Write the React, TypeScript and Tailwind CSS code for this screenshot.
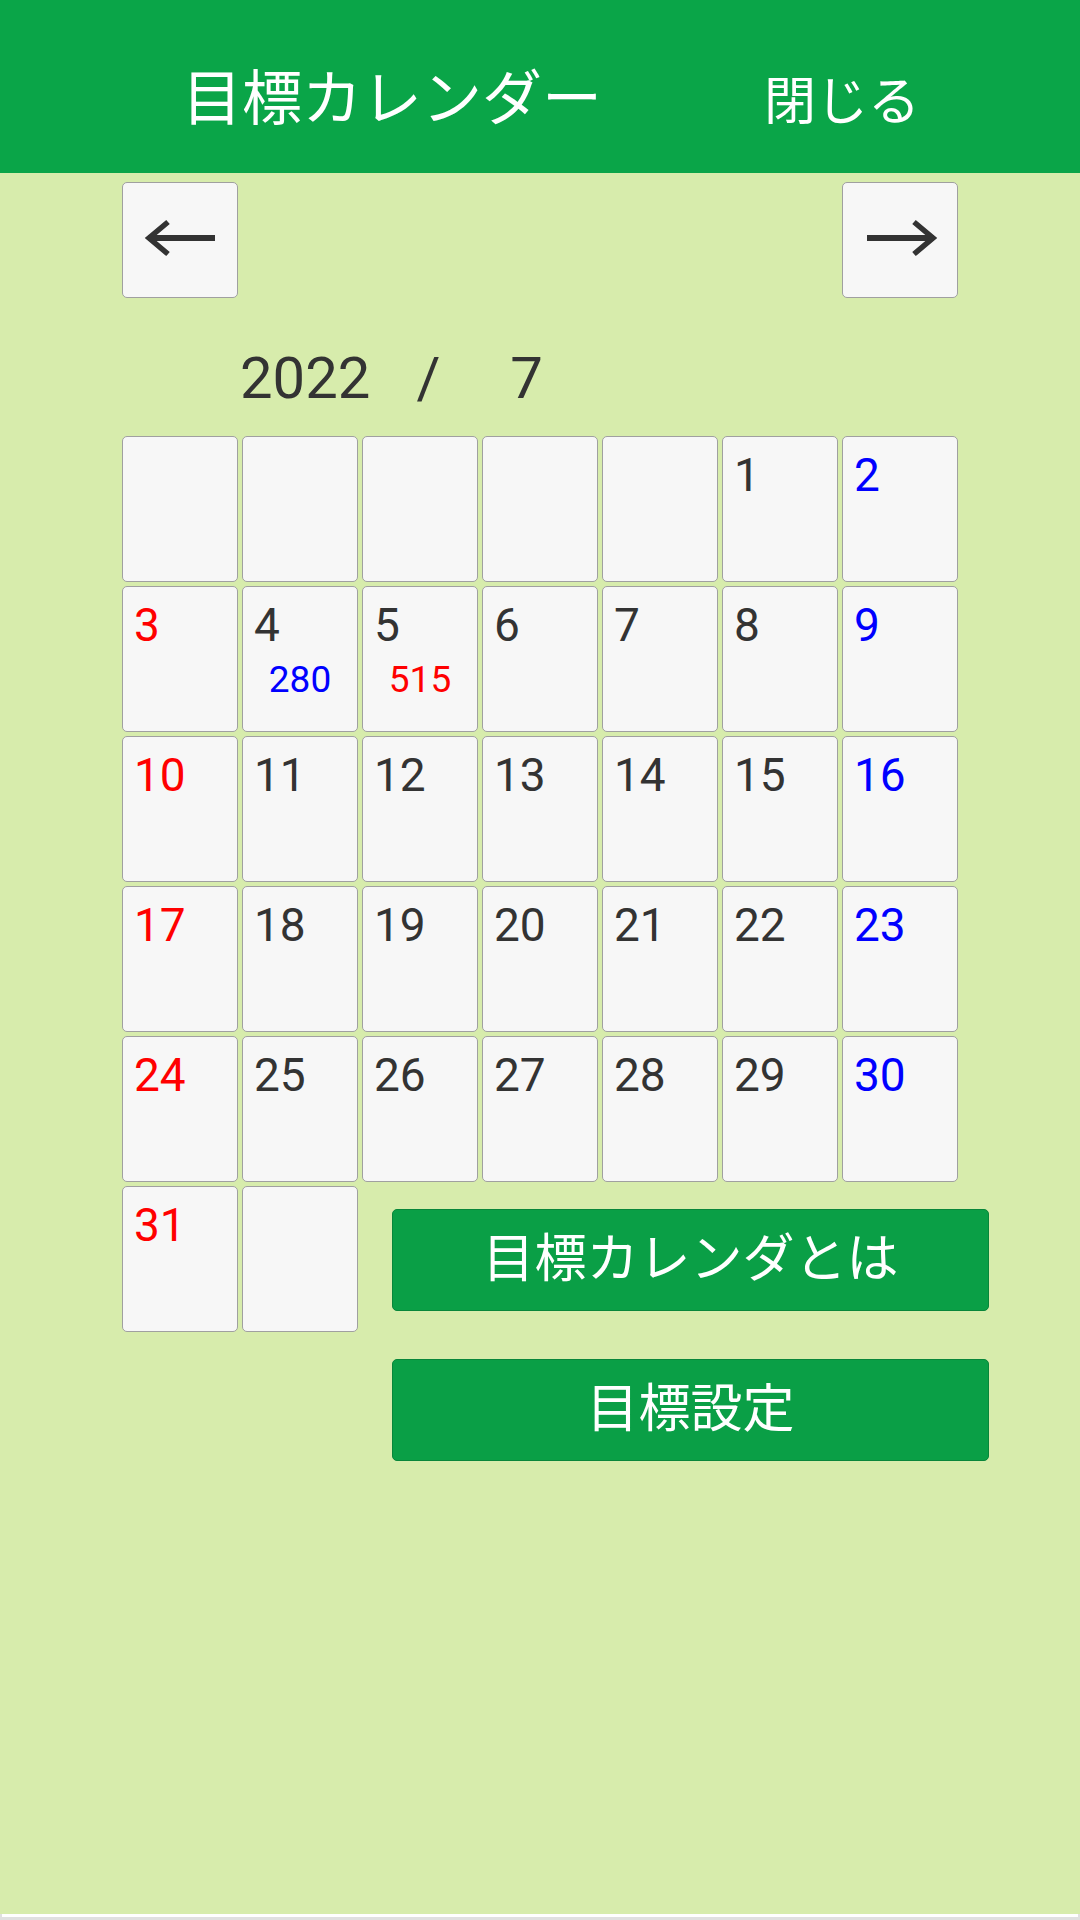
import React from "react";

const FONT = "Roboto, 'Noto Sans CJK JP', 'Noto Sans', sans-serif";

type Day = { n?: number; sub?: string; subColor?: string };

// 2022/7 は金曜始まり
const rows: Day[][] = [
  [{}, {}, {}, {}, {}, { n: 1 }, { n: 2 }],
  [{ n: 3 }, { n: 4, sub: "280", subColor: "text-[#0000ff]" }, { n: 5, sub: "515", subColor: "text-[#ff0000]" }, { n: 6 }, { n: 7 }, { n: 8 }, { n: 9 }],
  [{ n: 10 }, { n: 11 }, { n: 12 }, { n: 13 }, { n: 14 }, { n: 15 }, { n: 16 }],
  [{ n: 17 }, { n: 18 }, { n: 19 }, { n: 20 }, { n: 21 }, { n: 22 }, { n: 23 }],
  [{ n: 24 }, { n: 25 }, { n: 26 }, { n: 27 }, { n: 28 }, { n: 29 }, { n: 30 }],
];

function dayColor(col: number) {
  if (col === 0) return "text-[#ff0000]";
  if (col === 6) return "text-[#0000ff]";
  return "text-[#333333]";
}

function Cell({ day, col }: { day: Day; col: number }) {
  return (
    <div className="h-[146px] w-[116px] rounded-[5px] border border-[#a0a0a0] bg-[#f7f7f7] pl-[11px] pt-[11px]">
      {day.n !== undefined && (
        <div className={`text-[46px] leading-[54px] ${dayColor(col)}`}>{day.n}</div>
      )}
      {day.sub && (
        <div className={`-ml-[11px] mt-[6px] text-center text-[37px] leading-[43px] ${day.subColor}`}>{day.sub}</div>
      )}
    </div>
  );
}

function Arrow({ dir }: { dir: "left" | "right" }) {
  const flip = dir === "right";
  return (
    <svg width="116" height="116" viewBox="0 0 116 116" className={flip ? "-scale-x-100" : ""}>
      <line x1="25" y1="55" x2="92" y2="55" stroke="#333333" strokeWidth="6" />
      <polyline points="45,39 26,55 45,71" fill="none" stroke="#333333" strokeWidth="5.5" strokeLinejoin="miter" />
    </svg>
  );
}

export default function App() {
  return (
    <div className="flex min-h-[1920px] w-[1080px] flex-col bg-[#d7ecac]" style={{ fontFamily: FONT }}>
      <div className="flex h-[173px] items-start bg-[#0aa548] text-white">
        <div className="ml-[182px] mt-[70px] whitespace-nowrap text-[60px] leading-none">目標カレンダー</div>
        <div className="ml-[162px] mt-[77px] whitespace-nowrap text-[52px] leading-none">閉じる</div>
      </div>

      <div className="flex-1 pl-[122px]">
        <div className="mt-[9px] flex w-[836px] justify-between">
          <button className="h-[116px] w-[116px] rounded-[5px] border border-[#a0a0a0] bg-[#f7f7f7]">
            <Arrow dir="left" />
          </button>
          <button className="h-[116px] w-[116px] rounded-[5px] border border-[#a0a0a0] bg-[#f7f7f7]">
            <Arrow dir="right" />
          </button>
        </div>

        <div className="mt-[46px] pl-[118px] text-[58px] leading-[68px] text-[#333333]">
          <span>2022</span>
          <span className="ml-[46px]">/</span>
          <span className="ml-[70px]">7</span>
        </div>

        <div className="mt-[24px] flex flex-col gap-[4px]">
          {rows.map((r, i) => (
            <div key={i} className="flex gap-[4px]">
              {r.map((d, j) => (
                <Cell key={j} day={d} col={j} />
              ))}
            </div>
          ))}
          <div className="flex">
            <div className="flex gap-[4px]">
              <Cell day={{ n: 31 }} col={0} />
              <Cell day={{}} col={1} />
            </div>
            <div className="ml-[34px] flex flex-col">
              <button className="mt-[23px] h-[102px] w-[597px] rounded-[5px] border border-[#08863a] bg-[#0a9f46] text-[52px] text-white">
                目標カレンダとは
              </button>
              <button className="mt-[48px] h-[102px] w-[597px] rounded-[5px] border border-[#08863a] bg-[#0a9f46] text-[52px] text-white">
                目標設定
              </button>
            </div>
          </div>
        </div>
      </div>

      <div className="h-[6px] bg-[#e0e0e0]">
        <div className="mx-[2px] h-[3px] bg-white" />
      </div>
    </div>
  );
}
